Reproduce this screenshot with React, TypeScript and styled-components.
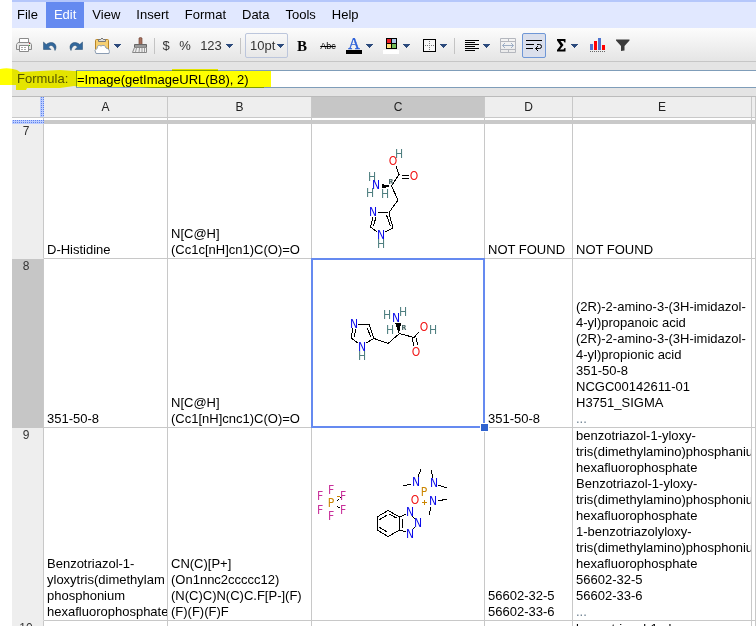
import React from "react";
import styled, { createGlobalStyle, css } from "styled-components";

const GlobalStyle = createGlobalStyle`
  * { box-sizing: border-box; }
  body {
    margin: 0;
    background: #fff;
    color: #000;
    font: 13px/16px "Liberation Sans", Arial, sans-serif;
  }
  button, input, select { font: inherit; color: inherit; }
`;

const Page = styled.main`
  height: 100vh;
  padding-left: 12px;
  overflow: hidden;
`;

const MenuBar = styled.nav`
  display: flex;
  height: 28px;
  border-top: 2px solid #b5c7fb;
  background: #e1e8ff;
`;

const MenuButton = styled.button<{ $active?: boolean }>`
  padding: 0 8px;
  border: 0;
  background: ${(p) => (p.$active ? "#658af0" : "transparent")};
  color: ${(p) => (p.$active ? "#fff" : "#000")};
  &:first-child { padding-left: 5px; }
`;

const Toolbar = styled.div`
  display: flex;
  align-items: center;
  height: 34px;
  padding-top: 2px;
  border-bottom: 1px solid #c6c6c6;
  background: linear-gradient(#fcfcfc, #e5e5e5);
`;

const ToolButton = styled.button<{ $width: number; $active?: boolean }>`
  display: flex;
  flex: none;
  align-items: center;
  justify-content: center;
  gap: 4px;
  width: ${(p) => p.$width}px;
  height: 25px;
  padding: 0;
  border: 0;
  background: transparent;
  color: #333;
  ${(p) =>
    p.$active &&
    css`
      margin: 0 4px;
      border: 1px solid #6f97d6;
      border-radius: 2px;
      background: #dadfec;
    `}
`;

const Separator = styled.span`
  flex: none;
  width: 1px;
  height: 16px;
  margin: 0 1px;
  background: #c4c4c4;
`;

const SizePicker = styled.label`
  display: flex;
  flex: none;
  align-items: center;
  width: 43px;
  height: 25px;
  margin: 0 3px;
  padding: 0 3px 0 4px;
  border: 1px solid #bcc6dc;
  border-radius: 2px;
  color: #333;
`;

const SizeSelect = styled.select`
  appearance: none;
  flex: 1;
  min-width: 0;
  padding: 0;
  border: 0;
  background: transparent;
`;

const BoldGlyph = styled.b`
  font: 900 15px/16px "Liberation Serif", serif;
  color: #000;
`;

const StrikeGlyph = styled.s`
  font-size: 9px;
  color: #000;
`;

const Icon = styled.svg`
  display: block;
  flex: none;
`;

const FormulaBar = styled.div`
  position: relative;
  display: flex;
  align-items: center;
  height: 35px;
  padding-left: 5px;
  border-bottom: 1px solid #bbb;
  background: #e4e4e4;
`;

const FormulaLabel = styled.label`
  flex: none;
  width: 59px;
  color: #555;
`;

const FormulaInput = styled.input`
  flex: 1;
  min-width: 0;
  height: 18px;
  padding: 0;
  border: 1px solid #7f9db9;
  border-right: 0;
  border-radius: 0;
  background: #fff;
  outline: 0;
`;

const Highlighter = styled.svg`
  position: absolute;
  top: 0;
  left: -12px;
  mix-blend-mode: multiply;
  pointer-events: none;
`;

const Sheet = styled.table`
  width: 100%;
  table-layout: fixed;
  border-collapse: separate;
  border-spacing: 0;
`;

const Column = styled.col<{ $width?: number }>`
  width: ${(p) => (p.$width ? `${p.$width}px` : "auto")};
`;

const dots = css`
  background: conic-gradient(#5f83ea 25%, #bccdff 0) 0 0 / 2px 2px;
`;

const HeadCell = styled.th<{ $selected?: boolean }>`
  height: 21px;
  padding: 0;
  border-right: 1px solid #c8c8c8;
  border-bottom: 1px solid #c8c8c8;
  background: ${(p) => (p.$selected ? "#c6c6c6" : "#eee")};
  color: #222;
  font-size: 12px;
  font-weight: normal;
`;

const Corner = styled.td`
  height: 21px;
  padding: 0;
  border-bottom: 1px solid #c8c8c8;
  background: #eee;
`;

const ColumnGrip = styled.div`
  width: 4px;
  height: 20px;
  margin-left: auto;
  ${dots}
`;

const GapCell = styled.td`
  height: 2px;
  padding: 0;
  border-right: 1px solid #c8c8c8;
`;

const FreezeGrip = styled.td`
  height: 4px;
  padding: 0;
  ${dots}
`;

const FreezeBar = styled.td`
  height: 4px;
  padding: 0;
  background: #c9c9c9;
`;

const RowHead = styled.th<{ $selected?: boolean }>`
  padding: 0 3px 0 0;
  border-right: 1px solid #c8c8c8;
  border-bottom: 1px solid ${(p) => (p.$selected ? "#c6c6c6" : "#eee")};
  background: ${(p) => (p.$selected ? "#c6c6c6" : "#eee")};
  color: #333;
  font-size: 12px;
  line-height: 14px;
  font-weight: normal;
  vertical-align: top;
`;

const SheetRow = styled.tr<{ $height: number }>`
  height: ${(p) => p.$height}px;
`;

const Cell = styled.td<{ $picture?: boolean }>`
  position: relative;
  padding: 0 0 0 ${(p) => (p.$picture ? 0 : 3)}px;
  border-right: 1px solid #c8c8c8;
  border-bottom: 1px solid #c8c8c8;
  vertical-align: ${(p) => (p.$picture ? "top" : "bottom")};
`;

const CellText = styled.div`
  overflow: hidden;
  white-space: pre;
`;

const More = styled.span`
  color: #6b7f8f;
`;

const Selection = styled.div`
  position: absolute;
  z-index: 1;
  inset: -1px;
  border: 2px solid #658af0;
  &::after {
    content: "";
    position: absolute;
    right: -6px;
    bottom: -6px;
    width: 7px;
    height: 7px;
    border: 1px solid #fff;
    background: #2f62cf;
  }
`;

const Molecule = styled.svg`
  display: block;
  shape-rendering: crispEdges;
  text {
    font: 12px "DejaVu Sans Condensed", "DejaVu Sans", sans-serif;
    text-anchor: middle;
  }
`;

const Caret = () => (
  <Icon width="7" height="4" viewBox="0 0 7 4" shapeRendering="crispEdges">
    <path d="M0 0H7V1H6V2H5V3H4V4H3V3H2V2H1V1H0Z" fill="#2c4a7c" />
  </Icon>
);

const PrintIcon = () => (
  <Icon width="16" height="15" viewBox="0 0 16 15" fill="none" stroke="#8a8a8a">
    <path d="M3.5 5V.5h9V5" fill="#fff" />
    <path d="M2 4.5h12l1.5 2v5h-3v-4h-9v4h-3v-5z" fill="#e8e8e8" />
    <path d="M3.5 7.500h9v6h-9z" fill="#fff" />
    <path d="M5 9.500h6M5 11.500h6" stroke="#aaa" strokeDasharray="2 1" />
    <path d="M13 5.500h1" stroke="#d33" />
    <path d="M13 7.500h1" stroke="#3a3" />
  </Icon>
);

const UndoIcon = ({ flip }: { flip?: boolean }) => (
  <Icon width="14" height="10" viewBox="0 0 14 10">
    <g transform={flip ? "matrix(-1 0 0 1 14 0)" : undefined}>
      <path
        d="M.5 1v7.500H8L5.500 6C7.500 3.500 10.500 3.500 12 9.500C15.500 4 9.500 -1.500 3.200 3.500Z"
        fill="#33689c"
        stroke="#22486f"
        strokeWidth=".5"
      />
    </g>
  </Icon>
);

const PasteIcon = () => (
  <Icon width="16" height="17" viewBox="0 0 16 17">
    <rect x="1.500" y="2.500" width="13" height="13" rx="1" fill="#f6cf72" stroke="#b98525" />
    <path d="M4.500 4.500v-2h2q1.500-3 3 0h2v2z" fill="#ddd" stroke="#777" />
    <path
      d="M2 16.500Q-.5 13 3 11.500Q3.500 7 7 9Q11 7 12 11Q16.500 12 15 16.500Z"
      fill="#fff"
      stroke="#8b9db3"
    />
  </Icon>
);

const BrushIcon = () => (
  <Icon width="16" height="17" viewBox="0 0 16 17">
    <path d="M7 1q1.500-1 3 0v7H7z" fill="#a56f5c" stroke="#75483b" strokeWidth=".7" />
    <path d="M2.500 7.500h12v3h-12z" fill="#999" stroke="#666" />
    <path d="M2.500 10.500h12v5H.5z" fill="#eee" stroke="#888" />
    <path d="M4.500 11l-1 4M7.500 11l-.5 4M10 11v4M12.500 11v4" stroke="#999" />
  </Icon>
);

const TextColorIcon = () => (
  <Icon width="16" height="16" viewBox="0 0 16 16">
    <text x="8" y="11" textAnchor="middle" fontFamily="Liberation Serif, serif" fontSize="16" fill="#2a5fd8" stroke="#2a5fd8" strokeWidth=".4">
      A
    </text>
    <path d="M0 12h16v4H0z" fill="#000" />
  </Icon>
);

const FillColorIcon = () => (
  <Icon width="16" height="16" viewBox="0 0 16 16" shapeRendering="crispEdges">
    <path d="M3 0h11v11H3z" />
    <path d="M4 1h4v4H4z" fill="#ee1c24" />
    <path d="M9 1h4v4H9z" fill="#a9c8ea" />
    <path d="M4 6h4v4H4z" fill="#ffe27a" />
    <path d="M9 6h4v4H9z" fill="#73bd5a" />
    <path d="M0 12h16v4H0z" fill="#fff" />
  </Icon>
);

const BordersIcon = () => (
  <Icon width="13" height="13" viewBox="0 0 13 13" shapeRendering="crispEdges" stroke="#000">
    <path d="M.5 .5h12v12H.5z" fill="#f8f8f8" />
    <path d="M2 6.500h10M6.500 2v10" stroke="#777" strokeDasharray="1 1" />
  </Icon>
);

const AlignIcon = () => (
  <Icon width="14" height="12" viewBox="0 0 14 12" shapeRendering="crispEdges" stroke="#000">
    <path d="M0 .5h14M0 2.500h10M0 4.500h14M0 6.500h10M0 8.500h14M0 10.500h10" />
  </Icon>
);

const MergeIcon = () => (
  <Icon width="16" height="15" viewBox="0 0 16 15" fill="none" stroke="#b4b7be">
    <path d="M.5 .5h15v14H.5zM.5 3.500h15M.5 11.500h15M8.500 .5v3M8.500 11.500v3" />
    <path d="M2.500 7.500h11M5 5L2.500 7.500L5 10M11 5L13.500 7.500L11 10" stroke="#9eafc6" />
  </Icon>
);

const WrapIcon = () => (
  <Icon width="16" height="13" viewBox="0 0 16 13" fill="none" stroke="#000">
    <path d="M0 1.500h16M0 5.500h8M0 9.500h7" />
    <path d="M11 5.500h2.500q2 0 2 2t-2 2H9.500M12 7L9.500 9.500L12 12" />
  </Icon>
);

const SumIcon = () => (
  <Icon width="10" height="13" viewBox="0 0 10 13">
    <path d="M0 0h8.500v3.500H7.500L6.500 2H3.500L6.500 6L3 10.500H6.500L7.500 9H8.500V12.500H0V11L3.500 6.500L0 1.500Z" />
  </Icon>
);

const ChartIcon = () => (
  <Icon width="16" height="15" viewBox="0 0 16 15" shapeRendering="crispEdges">
    <path d="M0 6h3v6H0zM8 0h3v12H8z" fill="#4f74cf" />
    <path d="M4 3h3v9H4zM12 7h3v5h-3z" fill="#f00" />
    <path d="M0 13.500h16" stroke="#666" strokeDasharray="1 1" />
  </Icon>
);

const FilterIcon = () => (
  <Icon width="14" height="13" viewBox="0 0 14 13">
    <path d="M0 .5h13.500v1L8.500 7v4.500L5 12V7L0 1.500z" fill="#3b3b3b" />
  </Icon>
);

type Atom = [string, number, number];

const atomColors: Record<string, string> = {
  N: "#0b0bea",
  O: "#f01010",
  H: "#4f7f80",
  P: "#cb8500",
  F: "#c8309a",
};

const Atoms = ({ list }: { list: Atom[] }) => (
  <>
    {list.map(([symbol, x, y]) => (
      <text key={`${x}-${y}`} x={x} y={y + 4} fill={atomColors[symbol]}>
        {symbol}
      </text>
    ))}
  </>
);

const Stereo = styled.text`
  && {
    font-size: 7px;
    font-weight: bold;
  }
  fill: #3d5c5c;
`;

const DHistidine = () => (
  <Molecule width="172" height="134" viewBox="-28 -16 172 134" role="img" aria-label="D-Histidine structure">
    <g fill="none" stroke="#000">
      <path d="M56 26L59 34.500L51.500 46L58 60L49 72.500M62 35.500H69M62 38.500H69M48 72.500H38" />
      <path d="M33 77L30.500 87L37 92M36 77L33.500 86M45 92L53 88L49 73M50.500 86L46.500 75" />
    </g>
    <path d="M51 46L42 44V48.500Z" />
    <Atoms list={[["H", 59, 14], ["O", 53, 21], ["O", 74, 36], ["H", 32, 37], ["N", 36, 45], ["H", 30, 53], ["H", 45, 54], ["N", 33, 72], ["N", 41, 95], ["H", 41, 104]]} />
    <Stereo x="51" y="44">R</Stereo>
  </Molecule>
);

const LHistidine = () => (
  <Molecule width="172" height="168" viewBox="-18 -31 172 168" role="img" aria-label="Histidine structure">
    <g fill="none" stroke="#000">
      <path d="M28 34.500H39L44 48.500L58 53.500L69.500 43.500L84 47.500L89 42M37 38L41 47" />
      <path d="M23 38L21 48L28 53M26 39L24 47M36 53L44 48.500M82 48L84 56M86 48L88 55" />
    </g>
    <path d="M69 44L65 33H71Z" />
    <Atoms list={[["H", 57, 25], ["N", 66, 28], ["H", 73, 22], ["H", 60, 40], ["O", 94, 37], ["H", 103, 40], ["O", 86, 62], ["N", 24, 34], ["N", 32, 57], ["H", 32, 66]]} />
    <Stereo x="74" y="40">R</Stereo>
  </Molecule>
);

const Bop = () => (
  <Molecule width="172" height="192" viewBox="12 -22 172 192" role="img" aria-label="BOP reagent structure">
    <g fill="none" stroke="#000">
      <path d="M88 60.500L99.500 67V80L88 86.500L77 80V67ZM79 70L87 65M79 77L87 82M96.500 68L89 64" />
      <path d="M99.500 67L106 64M99.500 80L106 82M102.500 69V78M112 66L115 69M115 77L112 80" />
      <path d="M121 19L118 27M103 36L111 34M131 20L133 28M138 35L147 38M138 51L147 49M131 57L129 65" />
      <path d="M37 51L41 47M37 56L40 58" strokeDasharray="1 1" />
    </g>
    <path d="M37 46.500H40M122 52.500H127M124.500 50V55" stroke="#cb8500" />
    <Atoms list={[["F", 20, 46], ["F", 31, 40], ["F", 43, 46], ["F", 20, 60], ["F", 31, 66], ["F", 43, 60], ["P", 31, 53], ["N", 116, 32], ["N", 134, 33], ["P", 124, 42], ["N", 133, 51], ["O", 115, 50], ["N", 110, 62], ["N", 118, 73], ["N", 110, 84]]} />
  </Molecule>
);

interface RowData {
  number: number;
  height: number;
  selected?: boolean;
  a?: string;
  b?: string;
  picture?: React.ReactNode;
  d?: string;
  e: string;
  more?: boolean;
}

const rows: RowData[] = [
  {
    number: 7,
    height: 135,
    a: "D-Histidine",
    b: "N[C@H]\n(Cc1c[nH]cn1)C(O)=O",
    picture: <DHistidine />,
    d: "NOT FOUND",
    e: "NOT FOUND",
  },
  {
    number: 8,
    height: 169,
    selected: true,
    a: "351-50-8",
    b: "N[C@H]\n(Cc1[nH]cnc1)C(O)=O",
    picture: <LHistidine />,
    d: "351-50-8",
    e: "(2R)-2-amino-3-(3H-imidazol-\n4-yl)propanoic acid\n(2R)-2-amino-3-(3H-imidazol-\n4-yl)propionic acid\n351-50-8\nNCGC00142611-01\nH3751_SIGMA\n",
    more: true,
  },
  {
    number: 9,
    height: 193,
    a: "Benzotriazol-1-\nyloxytris(dimethylam\nphosphonium\nhexafluorophosphate",
    b: "CN(C)[P+]\n(On1nnc2ccccc12)\n(N(C)C)N(C)C.F[P-](F)\n(F)(F)(F)F",
    picture: <Bop />,
    d: "56602-32-5\n56602-33-6",
    e: "benzotriazol-1-yloxy-\ntris(dimethylamino)phosphaniu\nhexafluorophosphate\nBenzotriazol-1-yloxy-\ntris(dimethylamino)phosphoniu\nhexafluorophosphate\n1-benzotriazolyloxy-\ntris(dimethylamino)phosphoniu\nhexafluorophosphate\n56602-32-5\n56602-33-6\n",
    more: true,
  },
  { number: 10, height: 17, e: "benzotriazol-1-yloxy-" },
];

const menus = ["File", "Edit", "View", "Insert", "Format", "Data", "Tools", "Help"];
const columns = ["A", "B", "C", "D", "E", ""];
const widths = [124, 144, 173, 88, 179];

export default function App() {
  return (
    <Page>
      <GlobalStyle />
      <MenuBar>
        {menus.map((name) => (
          <MenuButton key={name} $active={name === "Edit"}>{name}</MenuButton>
        ))}
      </MenuBar>
      <Toolbar role="toolbar">
        <ToolButton $width={24} aria-label="Print"><PrintIcon /></ToolButton>
        <ToolButton $width={28} aria-label="Undo"><UndoIcon /></ToolButton>
        <ToolButton $width={24} aria-label="Redo"><UndoIcon flip /></ToolButton>
        <ToolButton $width={39} aria-label="Paste"><PasteIcon /><Caret /></ToolButton>
        <ToolButton $width={26} aria-label="Paint format"><BrushIcon /></ToolButton>
        <Separator />
        <ToolButton $width={20}>$</ToolButton>
        <ToolButton $width={18}>%</ToolButton>
        <ToolButton $width={45}>123<Caret /></ToolButton>
        <Separator />
        <SizePicker>
          <SizeSelect aria-label="Font size" defaultValue="10pt">
            <option>10pt</option>
          </SizeSelect>
          <Caret />
        </SizePicker>
        <ToolButton $width={22} aria-label="Bold"><BoldGlyph>B</BoldGlyph></ToolButton>
        <ToolButton $width={30} aria-label="Strikethrough"><StrikeGlyph>Abc</StrikeGlyph></ToolButton>
        <ToolButton $width={33} aria-label="Text color"><TextColorIcon /><Caret /></ToolButton>
        <ToolButton $width={41} aria-label="Fill color"><FillColorIcon /><Caret /></ToolButton>
        <ToolButton $width={36} aria-label="Borders"><BordersIcon /><Caret /></ToolButton>
        <Separator />
        <ToolButton $width={42} aria-label="Align"><AlignIcon /><Caret /></ToolButton>
        <ToolButton $width={20} aria-label="Merge cells"><MergeIcon /></ToolButton>
        <ToolButton $width={24} $active aria-label="Wrap text"><WrapIcon /></ToolButton>
        <ToolButton $width={35} aria-label="Functions"><SumIcon /><Caret /></ToolButton>
        <ToolButton $width={26} aria-label="Insert chart"><ChartIcon /></ToolButton>
        <ToolButton $width={24} aria-label="Filter"><FilterIcon /></ToolButton>
      </Toolbar>
      <FormulaBar>
        <FormulaLabel htmlFor="formula">Formula:</FormulaLabel>
        <FormulaInput id="formula" defaultValue="=Image(getImageURL(B8), 2)" />
        <Highlighter width="272" height="34" viewBox="0 0 272 34">
          <path
            d="M0 7Q8 5 17 8L20 10L60 8L74 9H172V7H218V9H271V25H264V26H152L140 25H80L74 24L60 26H27L26 28H16V23H0Z"
            fill="#ff0"
          />
        </Highlighter>
      </FormulaBar>
      <Sheet>
        <colgroup>
          <Column $width={32} />
          {widths.map((width, i) => <Column key={i} $width={width} />)}
          <Column />
        </colgroup>
        <thead>
          <tr>
            <Corner><ColumnGrip /></Corner>
            {columns.map((name) => (
              <HeadCell key={name} scope="col" $selected={name === "C"}>{name}</HeadCell>
            ))}
          </tr>
          <tr>
            <GapCell />
            {columns.map((name) => <GapCell key={name} />)}
          </tr>
          <tr>
            <FreezeGrip />
            <FreezeBar colSpan={6} />
          </tr>
        </thead>
        <tbody>
          {rows.map((row) => (
            <SheetRow key={row.number} $height={row.height}>
              <RowHead scope="row" $selected={row.selected}>{row.number}</RowHead>
              <Cell><CellText>{row.a}</CellText></Cell>
              <Cell><CellText>{row.b}</CellText></Cell>
              <Cell $picture>
                {row.picture}
                {row.selected && <Selection />}
              </Cell>
              <Cell><CellText>{row.d}</CellText></Cell>
              <Cell>
                <CellText>{row.e}{row.more && <More>...</More>}</CellText>
              </Cell>
              <Cell />
            </SheetRow>
          ))}
        </tbody>
      </Sheet>
    </Page>
  );
}
